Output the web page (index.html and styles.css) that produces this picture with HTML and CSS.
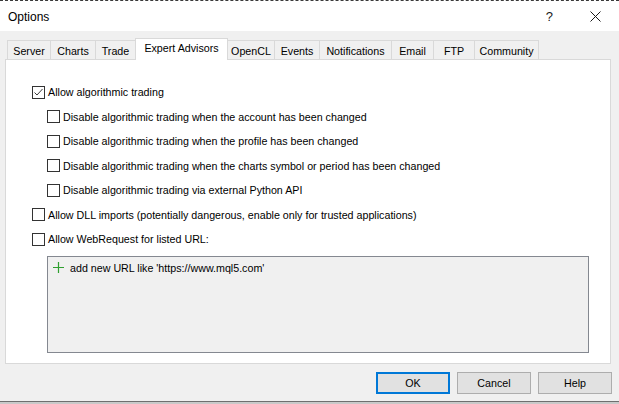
FILE: index.html
```html
<!DOCTYPE html>
<html>
<head>
<meta charset="utf-8">
<link rel="stylesheet" href="styles.css">
</head>
<body>
<div class="window">
  <div class="titlebar">
    <span class="title">Options</span>
    <span class="help">?</span>
    <span class="close"><svg width="11" height="11" viewBox="0 0 11 11"><path d="M0.5 0.5 L10.5 10.5 M10.5 0.5 L0.5 10.5" stroke="#1a1a1a" stroke-width="1" fill="none"/></svg></span>
  </div>
  <div class="body">
    <div class="tabs">
      <div class="tab w-server">Server</div>
      <div class="tab w-charts">Charts</div>
      <div class="tab w-trade">Trade</div>
      <div class="tab active w-ea">Expert Advisors</div>
      <div class="tab w-opencl">OpenCL</div>
      <div class="tab w-events">Events</div>
      <div class="tab w-notif">Notifications</div>
      <div class="tab w-email">Email</div>
      <div class="tab w-ftp">FTP</div>
      <div class="tab w-comm">Community</div>
    </div>
    <div class="panel">
      <div class="row"><span class="cb checked"><svg width="13" height="13" viewBox="0 0 13 13"><path d="M2.5 6.5 L5 9 L10.5 3" stroke="#3c3c3c" stroke-width="1" fill="none"/></svg></span><span class="label">Allow algorithmic trading</span></div>
      <div class="row sub"><span class="cb"></span><span class="label">Disable algorithmic trading when the account has been changed</span></div>
      <div class="row sub"><span class="cb"></span><span class="label">Disable algorithmic trading when the profile has been changed</span></div>
      <div class="row sub"><span class="cb"></span><span class="label">Disable algorithmic trading when the charts symbol or period has been changed</span></div>
      <div class="row sub"><span class="cb"></span><span class="label">Disable algorithmic trading via external Python API</span></div>
      <div class="row"><span class="cb"></span><span class="label">Allow DLL imports (potentially dangerous, enable only for trusted applications)</span></div>
      <div class="row"><span class="cb"></span><span class="label">Allow WebRequest for listed URL:</span></div>
      <div class="urlbox">
        <div class="urlrow">
          <svg class="plus" width="11" height="11" viewBox="0 0 11 11"><path d="M5.5 0 L5.5 11 M0 5.5 L11 5.5" stroke="#2fa02f" stroke-width="1.2" fill="none"/></svg>
          <span>add new URL like 'https://www.mql5.com'</span>
        </div>
      </div>
    </div>
    <div class="buttons">
      <div class="btn default">OK</div>
      <div class="btn">Cancel</div>
      <div class="btn">Help</div>
    </div>
  </div>
</div>
</body>
</html>
```
FILE: styles.css
```css
html, body {
  margin: 0;
  padding: 0;
  background: #c9c9c9;
}
body {
  width: 619px;
  height: 404px;
  overflow: hidden;
  font-family: "Liberation Sans", Arial, sans-serif;
  font-size: 10.7px;
  color: #000;
}
.window {
  width: 619px;
  height: 401px;
  border-bottom: 1px solid #6f6f6f;
  display: flex;
  flex-direction: column;
  background: #f0f0f0;
}
.titlebar {
  height: 30px;
  border-top: 1px dashed #3a3a3a;
  background: #fff;
  display: flex;
  align-items: center;
  position: relative;
}
.title {
  font-size: 12px;
  margin-left: 8px;
  margin-top: 1px;
  flex: 1;
}
.help {
  font-size: 13px;
  margin-right: 37px;
  margin-top: 1px;
  color: #1a1a1a;
}
.close {
  width: 11px;
  height: 11px;
  margin-right: 18px;
  display: flex;
}
.body {
  flex: 1;
  display: flex;
  flex-direction: column;
  padding: 7px 8px 0 5px;
}
.tabs {
  display: flex;
  align-items: flex-end;
  height: 21px;
  padding-left: 2px;
}
.tab {
  height: 19px;
  box-sizing: border-box;
  border: 1px solid #d9d9d9;
  border-bottom: none;
  margin-right: -1px;
  display: flex;
  align-items: center;
  justify-content: center;
  background: #f0f0f0;
  padding-top: 1px;
}
.tab.active {
  height: 22px;
  margin-bottom: -1px;
  background: #fff;
  position: relative;
  z-index: 1;
  padding-top: 0;
  padding-bottom: 3px;
}
.w-server { width: 44px; }
.w-charts { width: 46px; }
.w-trade { width: 41px; }
.w-ea { width: 93px; }
.w-opencl { width: 48px; }
.w-events { width: 46px; }
.w-notif { width: 73px; }
.w-email { width: 43px; }
.w-ftp { width: 42px; }
.w-comm { width: 65px; }
.panel {
  height: 305px;
  box-sizing: border-box;
  border: 1px solid #d9d9d9;
  background: #fff;
  padding: 20px 0 0 26px;
}
.row {
  height: 24.5px;
  display: flex;
  align-items: center;
}
.row.sub {
  padding-left: 15px;
}
.cb {
  width: 13px;
  height: 13px;
  box-sizing: border-box;
  border: 1px solid #333;
  background: #fff;
  display: flex;
  margin-right: 3px;
  flex: none;
}
.cb svg {
  margin: -1px;
}
.urlbox {
  margin: 4px 0 0 15px;
  width: 542px;
  height: 97px;
  box-sizing: border-box;
  border: 1px solid #848890;
  background: #f0f0f0;
}
.urlrow {
  height: 22px;
  display: flex;
  align-items: center;
  padding-left: 5px;
}
.plus {
  margin-right: 6px;
}
.buttons {
  display: flex;
  justify-content: flex-end;
  gap: 7px;
  margin-top: 8px;
  margin-right: -1px;
}
.btn {
  width: 74px;
  height: 22px;
  box-sizing: border-box;
  border: 1px solid #adadad;
  background: #e1e1e1;
  display: flex;
  align-items: center;
  justify-content: center;
}
.btn.default {
  border: 2px solid #0078d7;
}
```
